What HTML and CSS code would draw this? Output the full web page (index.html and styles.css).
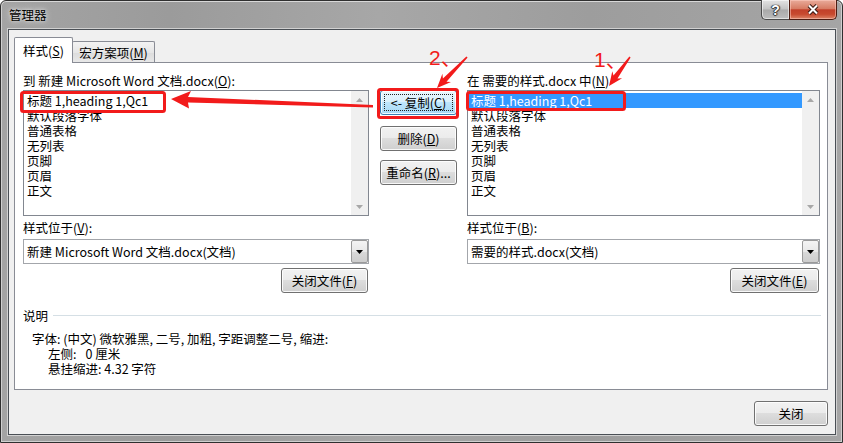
FILE: index.html
```html
<!DOCTYPE html>
<html>
<head>
<meta charset="utf-8">
<link rel="stylesheet" href="styles.css">
</head>
<body>
<div class="window">
  <div class="titlebar">
    <span class="title">管理器</span>
    <div class="caption">
      <div class="cap-btn help">?</div>
      <div class="cap-btn close">
        <svg width="14" height="11" viewBox="0 0 14 11"><path d="M3 1.5 L11 9.5 M11 1.5 L3 9.5" stroke="#3b1a12" stroke-width="4" fill="none"/><path d="M3 1.5 L11 9.5 M11 1.5 L3 9.5" stroke="#fff" stroke-width="2" fill="none"/></svg>
      </div>
    </div>
  </div>
  <div class="client">
    <div class="tabs">
      <div class="tab active">样式(<u>S</u>)</div>
      <div class="tab">宏方案项(<u>M</u>)</div>
    </div>
    <div class="panel">
      <div class="cols">
        <div class="col left">
          <div class="label">到 新建 Microsoft Word 文档.docx(<u>O</u>):</div>
          <div class="listbox">
            <div class="items">
              <div class="item">标题 1,heading 1,Qc1</div>
              <div class="item">默认段落字体</div>
              <div class="item">普通表格</div>
              <div class="item">无列表</div>
              <div class="item">页脚</div>
              <div class="item">页眉</div>
              <div class="item">正文</div>
            </div>
            <div class="vscroll">
              <span class="sarrow"><svg width="7" height="4" viewBox="0 0 7 4"><path d="M0 4 L3.5 0 L7 4Z" fill="#a7a7a7"/></svg></span>
              <span class="sarrow"><svg width="7" height="4" viewBox="0 0 7 4"><path d="M0 0 L3.5 4 L7 0Z" fill="#a7a7a7"/></svg></span>
            </div>
          </div>
          <div class="label2">样式位于(<u>V</u>):</div>
          <div class="combo">
            <span class="combo-text">新建 Microsoft Word 文档.docx(文档)</span>
            <span class="drop"><svg width="7" height="4" viewBox="0 0 7 4"><path d="M0 0 L3.5 4 L7 0Z" fill="#000"/></svg></span>
          </div>
          <div class="btn-row"><button class="btn closefile">关闭文件(<u>F</u>)</button></div>
        </div>
        <div class="mid">
          <button class="btn default copy">&lt;- 复制(<u>C</u>)</button>
          <button class="btn del">删除(<u>D</u>)</button>
          <button class="btn ren">重命名(<u>R</u>)...</button>
        </div>
        <div class="col right">
          <div class="label">在 需要的样式.docx 中(<u>N</u>)</div>
          <div class="listbox">
            <div class="items">
              <div class="item selected">标题 1,heading 1,Qc1</div>
              <div class="item">默认段落字体</div>
              <div class="item">普通表格</div>
              <div class="item">无列表</div>
              <div class="item">页脚</div>
              <div class="item">页眉</div>
              <div class="item">正文</div>
            </div>
            <div class="vscroll">
              <span class="sarrow"><svg width="7" height="4" viewBox="0 0 7 4"><path d="M0 4 L3.5 0 L7 4Z" fill="#a7a7a7"/></svg></span>
              <span class="sarrow"><svg width="7" height="4" viewBox="0 0 7 4"><path d="M0 0 L3.5 4 L7 0Z" fill="#a7a7a7"/></svg></span>
            </div>
          </div>
          <div class="label2">样式位于(<u>B</u>):</div>
          <div class="combo">
            <span class="combo-text">需要的样式.docx(文档)</span>
            <span class="drop"><svg width="7" height="4" viewBox="0 0 7 4"><path d="M0 0 L3.5 4 L7 0Z" fill="#000"/></svg></span>
          </div>
          <div class="btn-row"><button class="btn closefile">关闭文件(<u>E</u>)</button></div>
        </div>
      </div>
      <div class="desc-head"><span>说明</span><span class="rule"></span></div>
      <div class="desc">
        <div>字体: (中文) 微软雅黑, 二号, 加粗, 字距调整二号, 缩进:</div>
        <div class="sub">左侧:<span class="gap"></span>0 厘米</div>
        <div class="sub">悬挂缩进: 4.32 字符</div>
      </div>
    </div>
    <div class="footer"><button class="btn closebtn">关闭</button></div>
  </div>
</div>
<svg class="annot" width="843" height="443" viewBox="0 0 843 443">
  <g fill="none" stroke="#f21b1b" stroke-width="3">
    <rect x="21.5" y="92.5" width="143" height="19" rx="2"/>
    <rect x="467.5" y="92.5" width="157" height="17" rx="2"/>
    <rect x="378.5" y="89.5" width="79" height="28" rx="2"/>
  </g>
  <g fill="#f21b1b">
    <polygon points="171,99 191,91 188,97 373,105 373,107.5 188,102.5 189,108.5"/>
    <polygon points="437,88 451,82.1 446.5,81.8 467.6,57.6 466.4,56.4 442.9,78.4 442.4,73.7"/>
    <polygon points="609,86 622.1,78.2 617.5,78.6 630.6,57.5 629.4,56.5 613.5,75.6 612.3,71.2"/>
  </g>
  <text x="429" y="65" class="num">2、</text>
  <text x="594" y="67" class="num">1、</text>
</svg>
</body>
</html>
```
FILE: styles.css
```css
* { box-sizing: border-box; }
html, body { margin: 0; padding: 0; }
body {
  width: 843px;
  height: 443px;
  overflow: hidden;
  position: relative;
  background: #fff;
  font-family: "Noto Sans CJK SC", sans-serif;
  font-size: 12.5px;
  color: #000;
}
u { text-decoration: underline; text-underline-offset: 1px; }

.window {
  width: 843px;
  height: 443px;
  border: 1px solid #2f2f2f;
  border-radius: 6px 6px 0 0;
  background: linear-gradient(90deg, #a4a4a4 0%, #9b9b9b 20%, #a7a7a7 45%, #9d9d9d 70%, #a5a5a5 100%);
  box-shadow: inset 0 1px 0 #d8d8d8, inset 1px 0 0 #cfcfcf, inset -1px 0 0 #cfcfcf, inset 0 -1px 0 #cfcfcf;
  padding: 0 6px 7px 7px;
  display: flex;
  flex-direction: column;
}

.titlebar {
  height: 28px;
  display: flex;
  align-items: flex-start;
  flex-shrink: 0;
}
.title {
  padding: 6px 0 0 1px;
  line-height: 16px;
  font-size: 12.5px;
  text-shadow: 0 0 6px #e6e6e6, 0 0 3px #dcdcdc;
}
.caption {
  margin-left: auto;
  margin-top: -1px;
  margin-right: -1px;
  display: flex;
}
.cap-btn {
  height: 20px;
  display: flex;
  align-items: center;
  justify-content: center;
  border: 1px solid #4a4a4a;
  border-top: none;
}
.help {
  width: 28px;
  border-right: none;
  border-radius: 0 0 0 5px;
  background: linear-gradient(#e3e3e3 0%, #c3c3c3 48%, #a9a9a9 52%, #bdbdbd 100%);
  box-shadow: inset 0 0 0 1px rgba(255,255,255,0.55);
  color: #fff;
  font-family: "Liberation Sans", sans-serif;
  font-weight: bold;
  font-size: 14px;
  text-shadow: 0 0 1px #222, 1px 0 1px #333, -1px 0 1px #333, 0 1px 1px #333;
}
.close {
  width: 48px;
  border-color: #4d1c12;
  border-radius: 0 0 5px 0;
  background: linear-gradient(#e9ab9b 0%, #d77c64 45%, #c2402a 52%, #c84a2f 75%, #dc8467 100%);
  box-shadow: inset 0 0 0 1px rgba(255,210,200,0.5);
}

.client {
  flex: 1;
  background: #f0f0f0;
  border: 1px solid #4a4f55;
  box-shadow: 0 0 0 1px rgba(230,230,230,0.7);
  display: flex;
  flex-direction: column;
  padding: 0 7px 0 5px;
}

.tabs {
  display: flex;
  align-items: flex-start;
  padding-top: 7px;
  height: 33px;
  margin-bottom: -1px;
  flex-shrink: 0;
}
.tab {
  border: 1px solid #898c95;
  border-bottom: none;
  border-radius: 2px 2px 0 0;
  display: flex;
  align-items: center;
  justify-content: center;
}
.tab.active {
  width: 59px;
  height: 26px;
  background: #fff;
  position: relative;
  z-index: 2;
}
.tab:not(.active) {
  width: 83px;
  height: 22px;
  margin-top: 4px;
  margin-left: -1px;
  background: linear-gradient(#f3f3f3, #e6e6e6 50%, #dcdcdc 51%, #e9e9e9);
}

.panel {
  height: 328px;
  border: 1px solid #898c95;
  background: #fff;
  padding: 9px 7px 0 8px;
  position: relative;
  z-index: 1;
  flex-shrink: 0;
}
.cols { display: flex; }
.col.left { width: 346px; }
.col.right { width: 353px; }
.mid {
  width: 77px;
  margin: 0 10px 0 11px;
  padding-top: 18px;
  display: flex;
  flex-direction: column;
}
.label {
  height: 18px;
  line-height: 18px;
  white-space: nowrap;
}
.listbox {
  height: 126px;
  border: 1px solid #828790;
  display: flex;
  background: #fff;
}
.items {
  flex: 1;
  padding-top: 2px;
  padding-left: 1px;
}
.item {
  height: 15px;
  line-height: 15px;
  padding-left: 2px;
  white-space: nowrap;
}
.item.selected {
  background: #3399ff;
  color: #fff;
}
.vscroll {
  width: 17px;
  background: #f0f0f0;
  display: flex;
  flex-direction: column;
  justify-content: space-between;
  align-items: center;
  padding: 6px 0 6px 0;
}
.sarrow { display: flex; height: 5px; align-items: center; }

.label2 {
  margin-top: 4px;
  height: 16px;
  line-height: 16px;
  margin-bottom: 3px;
}
.combo {
  height: 25px;
  border: 1px solid #a3a6ab;
  background: #fff;
  display: flex;
}
.combo-text {
  flex: 1;
  padding-left: 3px;
  line-height: 23px;
  white-space: nowrap;
}
.drop {
  width: 17px;
  margin: 0;
  border: 1px solid #9a9a9a;
  border-radius: 2px;
  background: linear-gradient(#f4f4f4, #e8e8e8 50%, #d9d9d9 51%, #cdcdcd);
  display: flex;
  align-items: center;
  justify-content: center;
}
.btn-row {
  display: flex;
  justify-content: flex-end;
  margin-top: 4px;
}

.btn {
  font: inherit;
  color: #000;
  height: 25px;
  border: 1px solid #707070;
  border-radius: 3px;
  background: linear-gradient(#f2f2f2 0%, #ebebeb 49%, #dddddd 50%, #cfcfcf 100%);
  box-shadow: inset 0 0 0 1px rgba(255,255,255,0.85);
  padding: 0;
  display: flex;
  align-items: center;
  justify-content: center;
  white-space: nowrap;
}
.btn.default {
  border-color: #3c7fb1;
  background: linear-gradient(#eaf6fd 0%, #d9f0fc 49%, #bee6fd 50%, #a7d9f5 100%);
  position: relative;
}
.btn.default::after {
  content: "";
  position: absolute;
  left: 3px; top: 3px; right: 3px; bottom: 3px;
  border: 1px dotted #222;
}
.mid .btn { width: 77px; }
.mid .del { margin-top: 11px; }
.mid .ren { margin-top: 9px; }
.closefile { width: 87px; }
.col.right .closefile { width: 89px; margin-right: 1px; }
.col.left .closefile { margin-right: 1px; }

.desc-head {
  display: flex;
  align-items: center;
  margin-top: 14px;
  height: 16px;
}
.desc-head .rule {
  flex: 1;
  height: 1px;
  background: #d5dfe5;
  margin-left: 5px;
  margin-right: -1px;
}
.desc {
  margin-top: 8px;
  padding-left: 9px;
  line-height: 15px;
}
.desc .sub { padding-left: 16px; }
.gap { display: inline-block; width: 9px; }

.footer {
  display: flex;
  justify-content: flex-end;
  padding-top: 11px;
}
.closebtn { width: 74px; margin-right: 0; }

.annot {
  position: absolute;
  left: 0;
  top: 0;
  z-index: 10;
  pointer-events: none;
}
.num {
  font-family: "Liberation Sans", "Noto Sans CJK SC", sans-serif;
  font-size: 21px;
  fill: #f21b1b;
}
```
